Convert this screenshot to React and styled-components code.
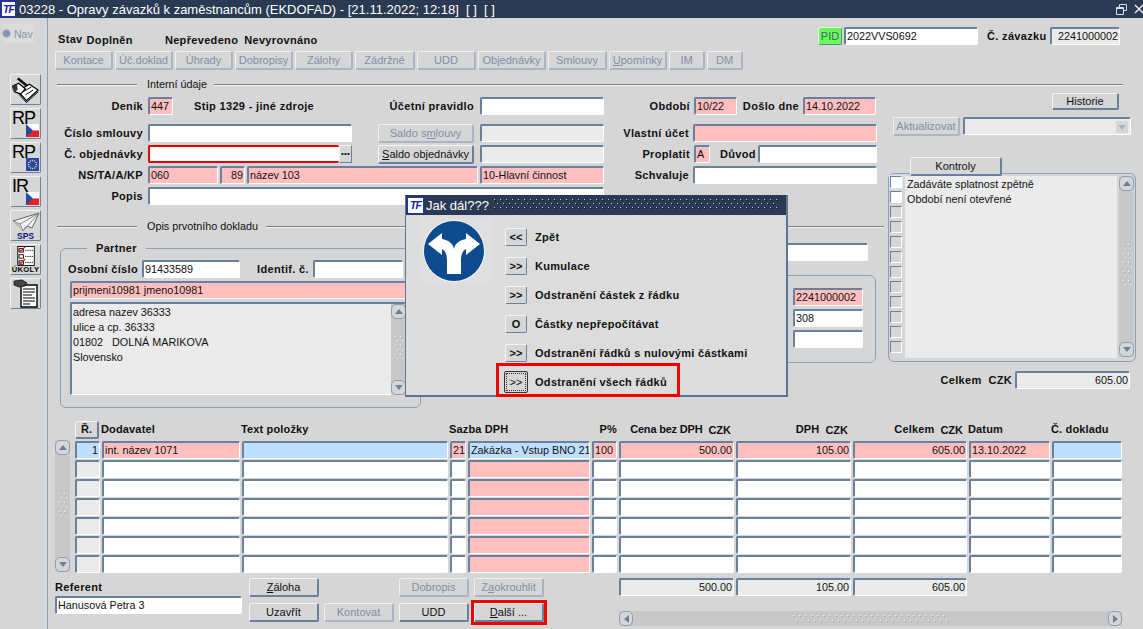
import { useId } from "react";
import styled, { createGlobalStyle } from "styled-components";

const SLATE = "#6b7f9e";
const LINE = "#8d9db6";
const PINK = "#ffbfbf";
const BLUE = "#bfdfff";
const GRAY = "#ebebeb";
const BG = "#d6d6d6";

const GlobalStyle = createGlobalStyle`
  html, body { margin: 0; padding: 0; background: ${BG}; }
  *, *::before, *::after { box-sizing: border-box; }
`;

const topButtons = [
  ["Kontace", 58], ["Úč.doklad", 58], ["Úhrady", 58], ["Dobropisy", 58], ["Zálohy", 58], ["Zádržné", 60],
  ["UDD", 59], ["Objednávky", 68], ["Smlouvy", 59], [<><u>U</u>pomínky</>, 58], ["IM", 36], ["DM", 36],
];

const emptyRows = [1, 2, 3, 4, 5, 6];

function CzFlag() {
  return (
    <svg width="13" height="13" viewBox="0 0 13 13">
      <rect width="13" height="6.5" fill="#fff" />
      <rect y="6.5" width="13" height="6.5" fill="#e8202a" />
      <path d="M0 0 L7 6.5 L0 13 Z" fill="#1d4f9e" />
    </svg>
  );
}

function EuFlag() {
  const stars = Array.from({ length: 12 }, (_, i) => i * Math.PI / 6);
  return (
    <svg width="13" height="13" viewBox="0 0 13 13">
      <rect width="13" height="13" fill="#2b46b0" />
      {stars.map((a) => (
        <circle key={a} cx={6.5 + Math.cos(a) * 4} cy={6.5 + Math.sin(a) * 4} r="0.7" fill="#f4e13c" />
      ))}
    </svg>
  );
}

function BookIcon() {
  return (
    <svg width="30" height="30" viewBox="0 0 30 30">
      <path d="M7 16 L19 9 L28 15 L16 26 Z" fill="#fff" stroke="#000" strokeWidth="1.3" />
      <path d="M7 18 L16 28 L28 17 M12 17 L21 12 M15 20 L23 15" fill="none" stroke="#000" strokeWidth="1" />
      <path d="M8 2 L18 10 L16 12 L6 4 Z" fill="#111" />
      <path d="M2 11 L8 8 L15 14 L10 19 L4 17 Z" fill="#fff" stroke="#000" strokeWidth="1.3" />
      <path d="M1 12 L6 9 L7 15 L3 17 Z" fill="#333" />
    </svg>
  );
}

function PlaneIcon() {
  return (
    <svg width="28" height="20" viewBox="0 0 28 20">
      <path d="M27 1 L1 9 L8 12 L11 19 L15 14 L20 16 Z" fill="#f2f2f2" stroke="#666" strokeWidth="1" />
      <path d="M27 1 L8 12 M27 1 L11 19" fill="none" stroke="#888" strokeWidth="1" />
      <path d="M1 9 L8 12 L11 19 L4 13 Z" fill="#bdbdbd" />
    </svg>
  );
}

function ChecklistIcon() {
  return (
    <svg width="22" height="23" viewBox="0 0 22 23">
      <rect x="1.5" y="0.5" width="19" height="22" fill="#fff" stroke="#000" />
      <rect x="3" y="3" width="5" height="4" fill="#fff" stroke="#000" />
      <rect x="3" y="10" width="5" height="4" fill="#fff" stroke="#000" />
      <rect x="3" y="17" width="5" height="4" fill="#fff" stroke="#000" />
      <path d="M3 4 L5 6 L10 1 M3 18 L5 20 L10 15" fill="none" stroke="#e01010" strokeWidth="1.4" />
      <path d="M10 5 H19 M10 12 H19 M10 19 H19" stroke="#000" strokeDasharray="1.5 1" />
    </svg>
  );
}

function DocIcon() {
  return (
    <svg width="28" height="30" viewBox="0 0 28 30">
      <path d="M9 6 H25 V28 H9 Z" fill="#fff" stroke="#000" strokeWidth="1.4" />
      <path d="M11 10 H23 M11 13 H23 M11 16 H20 M11 19 H23 M11 22 H23 M11 25 H18" stroke="#000" strokeWidth="1.2" />
      <path d="M2 2 L10 1 L15 4 L13 7 L7 8 L2 6 Z" fill="#444" stroke="#111" strokeWidth="0.8" />
    </svg>
  );
}

function RoadSign() {
  return (
    <svg width="71" height="66" viewBox="0 0 71 66">
      <rect width="71" height="66" fill="#dfdfdf" />
      <circle cx="34" cy="33" r="31" fill="#f2f2f2" />
      <circle cx="34" cy="33" r="30" fill="#0d4b8e" />
      <path d="M27 56 H41 V44 C41 37 42 33 46 31 V37 L60 26 L46 15 V21 C40 22 35 25 34 31 C33 25 28 22 22 21 V15 L8 26 L22 37 V31 C26 33 27 37 27 44 Z" fill="#fff" />
    </svg>
  );
}

// zig-zag grip dots, used on scrollbars and the dialog title
function Dots({ w, h, stepX, stepY, color = "#f6f6f6", shade = "#9aa6b8" }) {
  const id = useId();
  return (
    <svg width={w} height={h}>
      <defs>
        <pattern id={id} width={stepX} height={stepY} patternUnits="userSpaceOnUse">
          <rect x="0" y="0" width="1" height="1" fill={color} />
          <rect x="1" y="1" width="1" height="1" fill={shade} />
          <rect x={stepX / 2} y={stepY / 2} width="1" height="1" fill={color} />
          <rect x={stepX / 2 + 1} y={stepY / 2 + 1} width="1" height="1" fill={shade} />
        </pattern>
      </defs>
      <rect width={w} height={h} fill={`url(#${id})`} />
    </svg>
  );
}

function VerticalScroll({ height, grip = 27 }) {
  return (
    <VScroll $h={height}>
      <ScrollEnd><ArrowUp /></ScrollEnd>
      <ScrollTrack><Dots w={8} h={grip} stepX={5} stepY={9} /></ScrollTrack>
      <ScrollEnd><ArrowDown /></ScrollEnd>
    </VScroll>
  );
}

export default function App() {
  return (
    <>
      <GlobalStyle />
      <Screen>
        <TitleBar>
          <Logo><LogoText>TF</LogoText></Logo>
          <TitleText>03228 - Opravy závazků k zaměstnancům (EKDOFAD) - [21.11.2022; 12:18]&nbsp; [ ]&nbsp; [ ]</TitleText>
          <WindowControls>
            <svg width="11" height="11" viewBox="0 0 11 11">
              <path d="M3.5 3 V0.5 H10.5 V6.5 H8 M0.5 3.5 H7.5 V10.5 H0.5 Z M0.5 4.5 H7.5" fill="none" stroke="#d8dee8" />
            </svg>
            <svg width="10" height="10" viewBox="0 0 10 10">
              <path d="M1 1 L9 9 M9 1 L1 9" stroke="#f0f0f0" strokeWidth="1.4" />
            </svg>
          </WindowControls>
        </TitleBar>

        <Body>
          <Sidebar>
            <NavToggle><NavDot />Nav</NavToggle>
            <ToolList>
              <ToolButton><BookIcon /></ToolButton>
              <ToolButton><ToolLetters>RP</ToolLetters><FlagSlot><CzFlag /></FlagSlot></ToolButton>
              <ToolButton><ToolLetters>RP</ToolLetters><FlagSlot><EuFlag /></FlagSlot></ToolButton>
              <ToolButton><ToolLetters>IR</ToolLetters><FlagSlot><CzFlag /></FlagSlot></ToolButton>
              <ToolButton $column><PlaneIcon /><ToolCaption $blue>SPS</ToolCaption></ToolButton>
              <ToolButton $column><ChecklistIcon /><ToolCaption>ÚKOLY</ToolCaption></ToolButton>
              <ToolButton><DocIcon /></ToolButton>
            </ToolList>
          </Sidebar>

          <Main>
            <Header>
              <StatusLine>
                <Strong>Stav</Strong>
                <Strong $ml={4} $drop>Doplněn</Strong>
                <Strong $ml={32} $drop>Nepřevedeno</Strong>
                <Strong $ml={6} $drop>Nevyrovnáno</Strong>
              </StatusLine>
              <PidButton>PID</PidButton>
              <Field $w={134} $ml={2}>2022VVS0692</Field>
              <Strong $ml={9} $w={63}>Č. závazku</Strong>
              <Field $w={70} $bg={GRAY} $right>2241000002</Field>
            </Header>

            <ButtonBar>
              {topButtons.map(([text, width], i) => (
                <Button key={i} $w={width} disabled>{text}</Button>
              ))}
            </ButtonBar>

            <Separator $end={20}>
              <SepLine $w={80} /><SepTitle $w={77}>Interní údaje</SepTitle><SepLine $flex />
            </Separator>

            <Panes>
              <LeftPane>
                <FormRow $top={7}>
                  <Label $w={95}>Deník</Label>
                  <Field $w={25} $ml={5} $bg={PINK}>447</Field>
                  <Strong $ml={21} $w={160}>Stip 1329 - jiné zdroje</Strong>
                  <Label $w={120}>Účetní pravidlo</Label>
                  <Field $w={124} $ml={6} />
                  <Label $w={86}>Období</Label>
                  <Field $w={43} $ml={4} $bg={PINK}>10/22</Field>
                  <Label $w={62}>Došlo dne</Label>
                  <Field $w={73} $ml={4} $bg={PINK}>14.10.2022</Field>
                </FormRow>
                <FormRow $top={9}>
                  <Label $w={95}>Číslo smlouvy</Label>
                  <Field $w={204} $ml={5} />
                  <Button $w={96} $ml={26} disabled>Saldo s<u>m</u>louvy</Button>
                  <Field $w={124} $ml={6} $bg={GRAY} />
                  <Label $w={85}>Vlastní účet</Label>
                  <Field $w={184} $ml={4} $bg={PINK} />
                </FormRow>
                <FormRow $top={3}>
                  <Label $w={95}>Č. objednávky</Label>
                  <Field $w={191} $ml={5} $error />
                  <DotsButton>
                    <svg width="11" height="4" viewBox="0 0 11 4">
                      <path d="M1.5 1 h2 v2 h-2 Z M4.5 1 h2 v2 h-2 Z M7.5 1 h2 v2 h-2 Z" fill="#222" />
                    </svg>
                  </DotsButton>
                  <Button $w={96} $ml={26}><u>S</u>aldo objednávky</Button>
                  <Field $w={124} $ml={6} $bg={GRAY} />
                  <Label $w={86}>Proplatit</Label>
                  <Field $w={16} $ml={4} $bg={PINK}>A</Field>
                  <Strong $ml={10} $w={38}>Důvod</Strong>
                  <Field $w={119} />
                </FormRow>
                <FormRow $top={3}>
                  <Label $w={95}>NS/TA/A/KP</Label>
                  <Field $w={70} $ml={5} $bg={PINK}>060</Field>
                  <Field $w={25} $ml={2} $bg={PINK} $right>89</Field>
                  <Field $w={231} $ml={2} $bg={PINK}>název 103</Field>
                  <Field $w={124} $ml={2} $bg={PINK}>10-Hlavní činnost</Field>
                  <Label $w={85}>Schvaluje</Label>
                  <Field $w={184} $ml={4} />
                </FormRow>
                <FormRow $top={3}>
                  <Label $w={95}>Popis</Label>
                  <Field $w={456} $ml={5} />
                </FormRow>

                <Separator $start={9} $top={15}>
                  <SepLine $w={80} /><SepTitle $w={129}>Opis prvotního dokladu</SepTitle><SepLine $flex />
                </Separator>

                <OpisBody>
                  <Partner>
                    <PartnerLegend>Partner</PartnerLegend>
                    <FormRow>
                      <Strong $ml={-2} $w={74}>Osobní číslo</Strong>
                      <Field $w={98}>91433589</Field>
                      <Strong $ml={17} $w={56}>Identif. č.</Strong>
                      <Field $w={90} />
                    </FormRow>
                    <Field $w={336} $top={3} $bg={PINK}>prijmeni10981 jmeno10981</Field>
                    <Memo>
                      <MemoText>adresa nazev 36333<br />ulice a cp. 36333<br />01802&nbsp;&nbsp; DOLNÁ MARIKOVA<br />Slovensko</MemoText>
                      <VerticalScroll height={91} />
                    </Memo>
                  </Partner>
                  <OpisRight>
                    <TopFieldRow><Field $w={260} /></TopFieldRow>
                    <DocGroup>
                      <Field $w={70} $bg={PINK}>2241000002</Field>
                      <Field $w={70}>308</Field>
                      <Field $w={70} />
                    </DocGroup>
                  </OpisRight>
                </OpisBody>
              </LeftPane>

              <RightPane>
                <Button $w={67} $ml={168} $h={17} $top={3}>Historie</Button>
                <FormRow $top={7} $ml={9}>
                  <Button $w={67} disabled>Aktualizovat</Button>
                  <ComboBox><ComboArrow /></ComboBox>
                </FormRow>
                <Button $w={92} $ml={26} $top={22} $raised>Kontroly</Button>
                <ChecksGroup>
                  <CheckColumn>
                    {Array.from({ length: 12 }, (_, i) => <CheckBox key={i} $on={i < 2} $focus={i === 0} />)}
                  </CheckColumn>
                  <CheckTexts>
                    <CheckLine>Zadáváte splatnost zpětně</CheckLine>
                    <CheckLine>Období není otevřené</CheckLine>
                  </CheckTexts>
                  <VerticalScroll height={181} grip={45} />
                </ChecksGroup>
                <FormRow $top={9}>
                  <Label $w={128}>Celkem&nbsp; CZK</Label>
                  <Field $w={115} $ml={3} $bg={GRAY} $right>605.00</Field>
                </FormRow>
              </RightPane>
            </Panes>

            <TableArea>
              <VScrollSlot><VerticalScroll height={132} /></VScrollSlot>
              <Grid>
                <RowHead>Ř.</RowHead>
                <Head>Dodavatel</Head>
                <Head>Text položky</Head>
                <Head $span={2}>Sazba DPH</Head>
                <Head $right>P%</Head>
                <Head $right $pad={3} $tight>Cena bez DPH<Czk>CZK</Czk></Head>
                <Head $right $pad={3}>DPH<Czk>CZK</Czk></Head>
                <Head $right $pad={4}>Celkem<Czk>CZK</Czk></Head>
                <Head>Datum</Head>
                <Head>Č. dokladu</Head>

                <Cell $bg={BLUE} $right>1</Cell>
                <Cell $bg={PINK}>int. název 1071</Cell>
                <Cell $bg={BLUE} />
                <Cell $bg={PINK}>21</Cell>
                <Cell $bg={BLUE}>Zakázka - Vstup BNO 21</Cell>
                <Cell $bg={PINK}>100</Cell>
                <Cell $bg={PINK} $right>500.00</Cell>
                <Cell $bg={PINK} $right>105.00</Cell>
                <Cell $bg={PINK} $right>605.00</Cell>
                <Cell $bg={PINK}>13.10.2022</Cell>
                <Cell $bg={BLUE} />

                {emptyRows.map((row) => (
                  <EmptyRow key={row} />
                ))}
              </Grid>
            </TableArea>

            <Footer>
              <ReferentBox>
                <Strong>Referent</Strong>
                <Field $w={187} $top={3}>Hanusová Petra 3</Field>
              </ReferentBox>
              <ActionGrid>
                <Button $h={19}><u>Z</u>áloha</Button>
                <span />
                <Button $h={19} disabled>Dobropis</Button>
                <Button $h={19} disabled>Z<u>a</u>okrouhlit</Button>
                <Button $h={19}>Uzavřít</Button>
                <Button $h={19} disabled>Kontovat</Button>
                <Button $h={19}>UDD</Button>
                <Button $h={19} $marked><u>D</u>alší ...</Button>
              </ActionGrid>
              <TotalsBox>
                <FormRow>
                  <Field $w={115} $bg={GRAY} $right>500.00</Field>
                  <Field $w={115} $ml={2} $bg={GRAY} $right>105.00</Field>
                  <Field $w={114} $ml={2} $bg={GRAY} $right>605.00</Field>
                </FormRow>
                <HScroll>
                  <ScrollEnd $side><ArrowLeft /></ScrollEnd>
                  <ScrollTrack><Dots w={156} h={8} stepX={6} stepY={10} /></ScrollTrack>
                  <ScrollEnd $side><ArrowRight /></ScrollEnd>
                </HScroll>
              </TotalsBox>
            </Footer>

            <Dialog>
              <DialogTitle>
                <Logo $small><LogoText>TF</LogoText></Logo>
                <DialogCaption>Jak dál???</DialogCaption>
                <Dots w={284} h={12} stepX={6} stepY={8} color="#c4ccd8" shade="#0f1a2c" />
              </DialogTitle>
              <DialogBody>
                <SignSlot><RoadSign /></SignSlot>
                <Choices>
                  <Choice><ChoiceButton>&lt;&lt;</ChoiceButton><ChoiceLabel>Zpět</ChoiceLabel></Choice>
                  <Choice><ChoiceButton>&gt;&gt;</ChoiceButton><ChoiceLabel>Kumulace</ChoiceLabel></Choice>
                  <Choice><ChoiceButton>&gt;&gt;</ChoiceButton><ChoiceLabel>Odstranění částek z řádku</ChoiceLabel></Choice>
                  <Choice><ChoiceButton>O</ChoiceButton><ChoiceLabel>Částky nepřepočítávat</ChoiceLabel></Choice>
                  <Choice><ChoiceButton>&gt;&gt;</ChoiceButton><ChoiceLabel>Odstranění řádků s nulovými částkami</ChoiceLabel></Choice>
                  <Choice $marked><ChoiceButton $focused>&gt;&gt;</ChoiceButton><ChoiceLabel>Odstranění všech řádků</ChoiceLabel></Choice>
                </Choices>
              </DialogBody>
            </Dialog>
          </Main>
        </Body>
      </Screen>
    </>
  );
}

function EmptyRow() {
  return (
    <>
      <Cell $bg={GRAY} />
      <Cell />
      <Cell />
      <Cell />
      <Cell $bg={PINK} />
      <Cell />
      <Cell />
      <Cell />
      <Cell />
      <Cell />
      <Cell />
    </>
  );
}

const Screen = styled.div`
  width: 1143px;
  height: 629px;
  overflow: hidden;
  display: flex;
  flex-direction: column;
  background: ${BG};
  font-family: "Liberation Sans", Arial, sans-serif;
  font-size: 10.8px;
  color: #111;
`;

const TitleBar = styled.div`
  height: 18px;
  flex: none;
  display: flex;
  align-items: center;
  background: #2a3a52;
  color: #fff;
`;

const Logo = styled.div`
  width: ${(p) => (p.$small ? 17 : 15)}px;
  height: ${(p) => (p.$small ? 17 : 16)}px;
  flex: none;
  margin-left: 1px;
  display: flex;
  align-items: center;
  justify-content: center;
  background: #fff;
  border: 1px solid #1a2fd0;
`;

const LogoText = styled.span`
  font-style: italic;
  font-weight: bold;
  font-size: 10.5px;
  letter-spacing: -1px;
  color: #1420b0;
`;

const TitleText = styled.div`
  margin-left: 3px;
  font-size: 13px;
  white-space: nowrap;
`;

const WindowControls = styled.div`
  margin-left: auto;
  display: flex;
  align-items: center;
  gap: 7px;
  margin-right: -1px;
`;

const Body = styled.div`
  flex: 1;
  display: flex;
  min-height: 0;
`;

const Sidebar = styled.div`
  width: 48px;
  flex: none;
  border-right: 1px solid ${LINE};
  padding: 6px 0 0 2px;
`;

const NavToggle = styled.div`
  width: 32px;
  height: 19px;
  display: flex;
  align-items: center;
  gap: 3px;
  background: #dcdcdc;
  color: #8494ad;
  font-size: 10.5px;
`;

const NavDot = styled.span`
  width: 9px;
  height: 9px;
  flex: none;
  border-radius: 50%;
  background: #8494ad;
  border: 1px solid #b9c2d0;
`;

const ToolList = styled.div`
  margin: 31px 0 0 8px;
  display: flex;
  flex-direction: column;
  gap: 3px;
`;

const ToolButton = styled.div`
  position: relative;
  width: 31px;
  height: 31px;
  display: flex;
  flex-direction: ${(p) => (p.$column ? "column" : "row")};
  align-items: center;
  justify-content: ${(p) => (p.$column ? "flex-start" : "center")};
  padding-top: ${(p) => (p.$column ? 1 : 0)}px;
  background: ${BG};
  border: 1px solid;
  border-color: #f2f2f2 ${SLATE} ${SLATE} #f2f2f2;
  border-radius: 2px;
`;

const ToolLetters = styled.span`
  position: absolute;
  left: 1px;
  top: 0;
  font-size: 18px;
  line-height: 19px;
  letter-spacing: -1px;
  color: #000;
`;

const FlagSlot = styled.span`
  position: absolute;
  right: 1px;
  bottom: 1px;
  display: flex;
`;

const ToolCaption = styled.span`
  font-size: ${(p) => (p.$blue ? 8.5 : 7.5)}px;
  line-height: 8px;
  font-weight: bold;
  letter-spacing: ${(p) => (p.$blue ? 0 : 0.4)}px;
  color: ${(p) => (p.$blue ? "#10108c" : "#000")};
`;

const Main = styled.div`
  position: relative;
  flex: 1;
  min-width: 0;
`;

const Header = styled.div`
  margin-top: 8px;
  height: 19px;
  padding-left: 10px;
  display: flex;
  align-items: center;
`;

const StatusLine = styled.div`
  width: 760px;
  display: flex;
  align-items: center;
  padding-top: 7px;
`;

const Strong = styled.span`
  display: ${(p) => (p.$w ? "inline-block" : "inline")};
  flex: none;
  width: ${(p) => (p.$w ? `${p.$w}px` : "auto")};
  margin-left: ${(p) => p.$ml || 0}px;
  position: ${(p) => (p.$drop ? "relative" : "static")};
  top: ${(p) => (p.$drop ? 1 : 0)}px;
  font-weight: bold;
  font-size: 11px;
  letter-spacing: 0.33px;
  white-space: nowrap;
`;

const Label = styled(Strong)`
  text-align: right;
`;

const PidButton = styled.div`
  width: 24px;
  height: 18px;
  display: flex;
  align-items: center;
  justify-content: center;
  background: #66ff55;
  border: 1px solid;
  border-color: #f2f2f2 ${SLATE} ${SLATE} #f2f2f2;
  border-radius: 2px;
  color: #4a5a70;
  font-size: 11px;
`;

const Field = styled.div`
  width: ${(p) => p.$w}px;
  height: 18px;
  flex: none;
  margin-left: ${(p) => p.$ml || 0}px;
  margin-top: ${(p) => p.$top || 0}px;
  padding: 0 1px 0 ${(p) => (p.$right ? 0 : 1)}px;
  overflow: hidden;
  white-space: nowrap;
  line-height: 15px;
  text-align: ${(p) => (p.$right ? "right" : "left")};
  background: ${(p) => p.$bg || "#fff"};
  border: 2px solid;
  border-color: ${(p) => (p.$error ? "#e80000" : `${SLATE} #fff #fff ${SLATE}`)};
  border-bottom-width: ${(p) => (p.$error ? 2 : 1)}px;
  border-right-width: ${(p) => (p.$error ? 0 : 1)}px;
  border-radius: 2px;
`;

const Button = styled.button`
  display: block;
  flex: none;
  position: relative;
  width: ${(p) => (p.$w ? `${p.$w}px` : "auto")};
  height: ${(p) => p.$h || 19}px;
  margin: ${(p) => p.$top || 0}px 0 0 ${(p) => p.$ml || 0}px;
  padding: 0;
  z-index: ${(p) => (p.$raised ? 1 : "auto")};
  background: ${BG};
  border: 1px solid;
  border-width: 1px 2px 2px 1px;
  border-color: #f4f4f4 ${SLATE} ${SLATE} #f4f4f4;
  border-radius: 2px;
  font-family: inherit;
  font-size: 11px;
  line-height: 14px;
  white-space: nowrap;
  color: #111;

  &:disabled {
    color: #7f8fa9;
    border-color: #f0f0f0 #a9b4c6 #a9b4c6 #f0f0f0;
  }

  ${(p) => p.$marked && `
    &::after {
      content: "";
      position: absolute;
      left: -4px;
      top: -4px;
      right: -5px;
      bottom: -5px;
      border: 3px solid #f00000;
    }
  `}
`;

const ButtonBar = styled.div`
  margin: 6px 0 0 7px;
  display: flex;
  gap: 2px;
`;

const Separator = styled.div`
  height: 12px;
  margin: ${(p) => p.$top ?? 8}px ${(p) => p.$end || 0}px 0 ${(p) => p.$start ?? 9}px;
  display: flex;
  align-items: center;
`;

const SepLine = styled.div`
  height: 1px;
  width: ${(p) => (p.$w ? `${p.$w}px` : "auto")};
  flex: ${(p) => (p.$flex ? 1 : "none")};
  background: #7f7f7f;
  box-shadow: 0 1px 0 #f4f4f4;
`;

const SepTitle = styled.div`
  width: ${(p) => p.$w}px;
  padding-left: 10px;
  font-size: 10.8px;
  white-space: nowrap;
`;

const Panes = styled.div`
  display: flex;
  height: 318px;
`;

const LeftPane = styled.div`
  width: 836px;
  flex: none;
`;

const RightPane = styled.div`
  flex: 1;
  min-width: 0;
`;

const FormRow = styled.div`
  display: flex;
  align-items: center;
  margin: ${(p) => p.$top || 0}px 0 0 ${(p) => p.$ml || 0}px;
  height: 18px;
`;

const DotsButton = styled.div`
  width: 13px;
  height: 18px;
  flex: none;
  display: flex;
  align-items: center;
  justify-content: center;
  border: 1px solid;
  border-color: #f2f2f2 ${SLATE} ${SLATE} #f2f2f2;
`;

const OpisBody = styled.div`
  display: flex;
  padding-left: 12px;
`;

const Partner = styled.fieldset`
  width: 361px;
  height: 167px;
  flex: none;
  margin: 9px 0 0;
  padding: 5px 0 0 9px;
  border: 1px solid ${LINE};
  border-radius: 6px;
`;

const PartnerLegend = styled.legend`
  margin-left: 17px;
  padding: 0 9px;
  font-weight: bold;
  font-size: 11px;
  letter-spacing: 0.33px;
  line-height: 14px;
`;

const Memo = styled.div`
  width: 336px;
  height: 93px;
  margin-top: 3px;
  display: flex;
  justify-content: space-between;
  background: ${GRAY};
  border: 2px solid;
  border-color: ${SLATE} #fff #fff ${SLATE};
  border-bottom-width: 1px;
  border-right-width: 0;
`;

const MemoText = styled.div`
  padding: 1px 1px;
  line-height: 15px;
`;

const VScroll = styled.div`
  width: 15px;
  height: ${(p) => p.$h}px;
  flex: none;
  display: flex;
  flex-direction: column;
  background: #c8c8c8;
`;

const ScrollEnd = styled.div`
  width: ${(p) => (p.$side ? 14 : 15)}px;
  height: 15px;
  flex: none;
  display: flex;
  align-items: center;
  justify-content: center;
  background: ${BG};
  border: 1px solid ${LINE};
  border-radius: 5px;
`;

const ScrollTrack = styled.div`
  flex: 1;
  display: flex;
  align-items: center;
  justify-content: center;
`;

const ArrowUp = styled.span`
  width: 0;
  height: 0;
  border: 4px solid transparent;
  border-top-width: 0;
  border-bottom: 5px solid ${SLATE};
`;

const ArrowDown = styled.span`
  width: 0;
  height: 0;
  border: 4px solid transparent;
  border-bottom-width: 0;
  border-top: 5px solid ${SLATE};
`;

const ArrowLeft = styled.span`
  width: 0;
  height: 0;
  border: 4px solid transparent;
  border-left-width: 0;
  border-right: 5px solid ${SLATE};
`;

const ArrowRight = styled.span`
  width: 0;
  height: 0;
  border: 4px solid transparent;
  border-right-width: 0;
  border-left: 5px solid ${SLATE};
`;

const OpisRight = styled.div`
  width: 455px;
  flex: none;
  display: flex;
  flex-direction: column;
  margin-top: 11px;
`;

const TopFieldRow = styled.div`
  display: flex;
  justify-content: flex-end;
  padding-right: 8px;
`;

const DocGroup = styled.div`
  height: 88px;
  margin: 14px 0 0 10px;
  padding: 12px 12px 0 0;
  display: flex;
  flex-direction: column;
  align-items: flex-end;
  gap: 3px;
  border: 1px solid ${LINE};
  border-radius: 6px;
`;

const ComboBox = styled.div`
  width: 168px;
  height: 18px;
  margin-left: 3px;
  display: flex;
  justify-content: flex-end;
  align-items: center;
  padding-right: 2px;
  background: ${GRAY};
  border: 2px solid;
  border-color: ${SLATE} #fff #fff ${SLATE};
  border-bottom-width: 1px;
  border-right-width: 1px;
  border-radius: 2px;
`;

const ComboArrow = styled.span`
  width: 12px;
  height: 12px;
  display: flex;
  background: ${BG};
  position: relative;

  &::after {
    content: "";
    width: 0;
    height: 0;
    margin: 4px 2px;
    border: 4px solid transparent;
    border-bottom-width: 0;
    border-top: 5px solid #a8b2c2;
  }
`;

const ChecksGroup = styled.div`
  width: 248px;
  height: 189px;
  margin: -3px 0 0 4px;
  padding: 2px 2px 0 0;
  display: flex;
  border: 1px solid ${LINE};
  border-radius: 6px;
`;

const CheckColumn = styled.div`
  width: 16px;
  flex: none;
  display: flex;
  flex-direction: column;
  gap: 3px;
  padding-left: 1px;
`;

const CheckBox = styled.span`
  width: 12px;
  height: 12px;
  flex: none;
  background: ${(p) => (p.$on ? "#fff" : BG)};
  border: 1px solid;
  border-color: ${SLATE} #fff #fff ${SLATE};
  outline: ${(p) => (p.$focus ? "1px solid #cfe6ff" : "none")};
`;

const CheckTexts = styled.div`
  width: 212px;
  height: 182px;
  flex: none;
  margin-right: 2px;
  padding: 1px 0 0 2px;
  background: ${GRAY};
`;

const CheckLine = styled.div`
  height: 15px;
  line-height: 15px;
  white-space: nowrap;
`;

const TableArea = styled.div`
  margin: 13px 0 0 7px;
  display: flex;
`;

const VScrollSlot = styled.div`
  margin-top: 19px;
`;

const Grid = styled.div`
  margin-left: 5px;
  display: grid;
  grid-template-columns: 25px 138px 206px 16px 122px 25px 115px 115px 114px 81px 70px;
  grid-template-rows: 19px repeat(7, 18px);
  column-gap: 2px;
  row-gap: 1px;
`;

const RowHead = styled(Button).attrs({ as: "div" })`
  height: 18px;
  width: 24px;
  font-weight: bold;
  text-align: center;
`;

const Head = styled.div`
  grid-column: span ${(p) => p.$span || 1};
  height: 19px;
  margin-left: -1px;
  padding-right: ${(p) => p.$pad || 0}px;
  line-height: 17px;
  font-weight: bold;
  font-size: 11px;
  letter-spacing: ${(p) => (p.$tight ? -0.2 : 0.15)}px;
  white-space: nowrap;
  text-align: ${(p) => (p.$right ? "right" : "left")};
`;

const Czk = styled.span`
  margin-left: 6px;
  position: relative;
  top: 1px;
  letter-spacing: 0;
`;

const Cell = styled(Field)`
  width: auto;
`;

const Footer = styled.div`
  margin: 5px 0 0 7px;
  display: flex;
`;

const ReferentBox = styled.div`
  width: 194px;
  flex: none;
  padding-top: 3px;
`;

const ActionGrid = styled.div`
  width: 295px;
  flex: none;
  display: grid;
  grid-template-columns: repeat(4, 70px);
  grid-template-rows: 19px 19px;
  column-gap: 5px;
  row-gap: 6px;
`;

const TotalsBox = styled.div`
  margin-left: 75px;
`;

const HScroll = styled.div`
  width: 503px;
  height: 15px;
  margin-top: 15px;
  display: flex;
  background: #c8c8c8;
`;

const Dialog = styled.div`
  position: absolute;
  left: 357px;
  top: 177px;
  width: 383px;
  height: 202px;
  display: flex;
  flex-direction: column;
  background: #dcdcdc;
  border-right: 2px solid #5f7595;
  border-bottom: 2px solid #5f7595;
  border-left: 1px solid #5f7595;
`;

const DialogTitle = styled.div`
  height: 20px;
  flex: none;
  display: flex;
  align-items: center;
  background: #2a3a52;
  color: #fff;
`;

const DialogCaption = styled.div`
  margin-left: 2px;
  width: 68px;
  font-size: 13px;
`;

const DialogBody = styled.div`
  flex: 1;
  display: flex;
`;

const SignSlot = styled.div`
  margin: 3px 0 0 14px;
  width: 85px;
  flex: none;
`;

const Choices = styled.div`
  margin-top: 7px;
  display: flex;
  flex-direction: column;
`;

const Choice = styled.div`
  position: relative;
  height: 29px;
  display: flex;
  align-items: center;

  ${(p) => p.$marked && `
    &::after {
      content: "";
      position: absolute;
      left: -9px;
      top: -4px;
      width: 184px;
      height: 34px;
      border: 3px solid #f00000;
    }
  `}
`;

const ChoiceButton = styled.div`
  width: 22px;
  height: 18px;
  flex: none;
  display: flex;
  align-items: center;
  justify-content: center;
  font-size: 11px;
  font-weight: bold;
  background: ${BG};
  border: 1px solid;
  border-color: #f4f4f4 ${SLATE} ${SLATE} #f4f4f4;
  border-radius: 2px;

  ${(p) => p.$focused && `
    width: 24px;
    height: 22px;
    margin-left: -1px;
    margin-right: -1px;
    font-weight: normal;
    border-color: #333;
    outline: 1px dotted #333;
    outline-offset: -3px;
  `}
`;

const ChoiceLabel = styled.div`
  margin-left: 8px;
  font-weight: bold;
  font-size: 11px;
  letter-spacing: 0.3px;
  white-space: nowrap;
`;
